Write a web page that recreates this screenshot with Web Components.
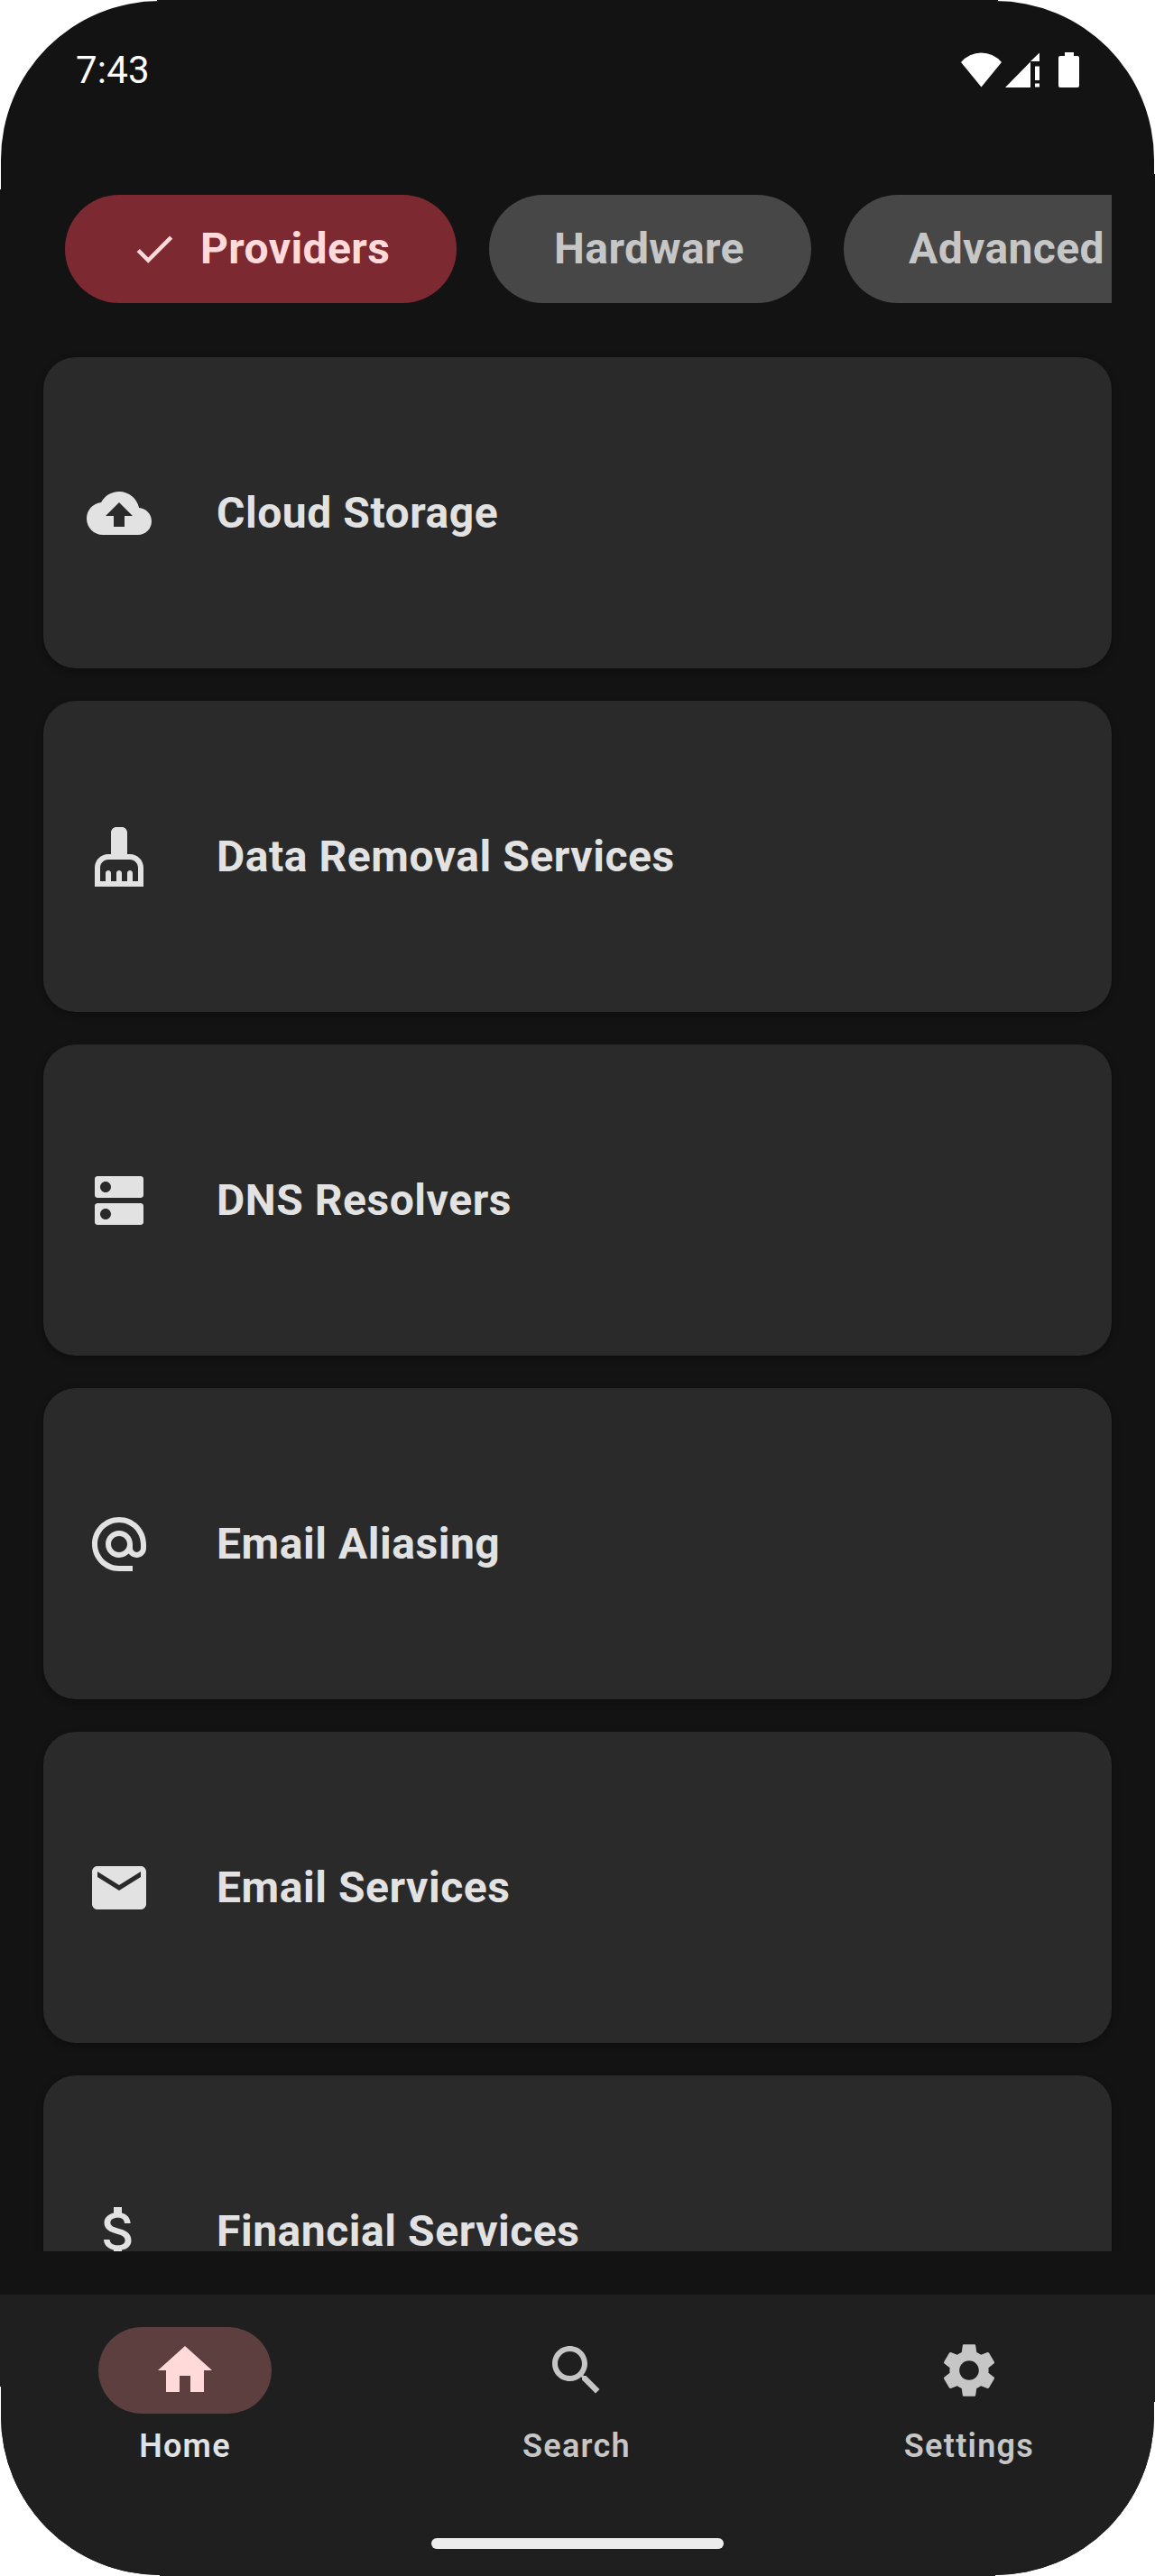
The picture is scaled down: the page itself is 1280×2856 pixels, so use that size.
<!DOCTYPE html>
<html lang="en">
<head>
<meta charset="utf-8">
<title>Providers</title>
<style>
  html, body { margin: 0; background: #fff; }
  body { font-family: Roboto, "Liberation Sans", sans-serif; width: 1280px; height: 2856px; overflow: hidden; }
</style>
</head>
<body>
<phone-screen>
  <status-bar slot="status" time="7:43"></status-bar>
  <chip-row slot="filters">
    <filter-chip selected style="width:434px">Providers</filter-chip>
    <filter-chip style="width:357px">Hardware</filter-chip>
    <filter-chip>Advanced</filter-chip>
  </chip-row>
  <category-card icon="cloud">Cloud Storage</category-card>
  <category-card icon="broom">Data Removal Services</category-card>
  <category-card icon="dns">DNS Resolvers</category-card>
  <category-card icon="at">Email Aliasing</category-card>
  <category-card icon="mail">Email Services</category-card>
  <category-card icon="dollar">Financial Services</category-card>
  <nav-bar slot="nav">
    <nav-item icon="home" selected>Home</nav-item>
    <nav-item icon="search">Search</nav-item>
    <nav-item icon="settings">Settings</nav-item>
  </nav-bar>
</phone-screen>

<script>
const ICONS = {
  check: 'M9 16.17L4.83 12l-1.42 1.41L9 19 21 7l-1.41-1.41z',
  cloud: 'M19.35 10.04C18.67 6.59 15.64 4 12 4 9.11 4 6.6 5.64 5.35 8.04 2.34 8.36 0 10.91 0 14c0 3.31 2.69 6 6 6h13c2.76 0 5-2.24 5-5 0-2.64-2.05-4.78-4.65-4.96zM14 13v4h-4v-4H7l5-5 5 5h-3z',
  broom: 'M16 11h-1V3c0-1.1-.9-2-2-2h-2c-1.1 0-2 .9-2 2v8H8c-2.76 0-5 2.24-5 5v7h18v-7c0-2.76-2.24-5-5-5zm3 10h-2v-3c0-.55-.45-1-1-1s-1 .45-1 1v3h-2v-3c0-.55-.45-1-1-1s-1 .45-1 1v3H9v-3c0-.55-.45-1-1-1s-1 .45-1 1v3H5v-5c0-1.65 1.35-3 3-3h8c1.65 0 3 1.35 3 3v5z',
  dns: 'M20 13H4c-.55 0-1 .45-1 1v6c0 .55.45 1 1 1h16c.55 0 1-.45 1-1v-6c0-.55-.45-1-1-1zM7 19c-1.1 0-2-.9-2-2s.9-2 2-2 2 .9 2 2-.9 2-2 2zM20 3H4c-.55 0-1 .45-1 1v6c0 .55.45 1 1 1h16c.55 0 1-.45 1-1V4c0-.55-.45-1-1-1zM7 9c-1.1 0-2-.9-2-2s.9-2 2-2 2 .9 2 2-.9 2-2 2z',
  at: 'M12 2C6.48 2 2 6.48 2 12s4.48 10 10 10h5v-2h-5c-4.34 0-8-3.66-8-8s3.66-8 8-8 8 3.66 8 8v1.43c0 .79-.71 1.57-1.5 1.57s-1.5-.78-1.5-1.57V12c0-2.76-2.24-5-5-5s-5 2.24-5 5 2.24 5 5 5c1.38 0 2.64-.56 3.54-1.47.65.89 1.77 1.47 2.96 1.47 1.97 0 3.5-1.6 3.5-3.57V12c0-5.52-4.48-10-10-10zm0 13c-1.66 0-3-1.34-3-3s1.34-3 3-3 3 1.34 3 3-1.34 3-3 3z',
  mail: 'M20 4H4c-1.1 0-1.99.9-1.99 2L2 18c0 1.1.9 2 2 2h16c1.1 0 2-.9 2-2V6c0-1.1-.9-2-2-2zm0 4l-8 5-8-5V6l8 5 8-5v2z',
  dollar: 'M11.8 10.9c-2.27-.59-3-1.2-3-2.15 0-1.09 1.01-1.85 2.7-1.85 1.78 0 2.44.85 2.5 2.1h2.21c-.07-1.72-1.12-3.3-3.21-3.81V3h-3v2.16c-1.94.42-3.5 1.68-3.5 3.61 0 2.31 1.91 3.46 4.7 4.13 2.5.6 3 1.48 3 2.41 0 .69-.49 1.79-2.7 1.79-2.06 0-2.87-.92-2.98-2.1h-2.2c.12 2.19 1.76 3.42 3.68 3.83V21h3v-2.15c1.95-.37 3.5-1.5 3.5-3.55 0-2.84-2.43-3.81-4.7-4.4z',
  home: 'M10 20v-6h4v6h5v-8h3L12 3 2 12h3v8z',
  search: 'M15.5 14h-.79l-.28-.27C15.41 12.59 16 11.11 16 9.5 16 5.91 13.09 3 9.5 3S3 5.91 3 9.5 5.91 16 9.5 16c1.61 0 3.09-.59 4.23-1.57l.27.28v.79l5 4.99L20.49 19l-4.99-5zm-6 0C7.01 14 5 11.99 5 9.5S7.01 5 9.5 5 14 7.01 14 9.5 11.99 14 9.5 14z',
  settings: 'M19.14 12.94c.04-.3.06-.61.06-.94 0-.32-.02-.64-.07-.94l2.03-1.58c.18-.14.23-.41.12-.61l-1.92-3.32c-.12-.22-.37-.29-.59-.22l-2.39.96c-.5-.38-1.03-.7-1.62-.94l-.36-2.54c-.04-.24-.24-.41-.48-.41h-3.84c-.24 0-.43.17-.47.41l-.36 2.54c-.59.24-1.13.57-1.62.94l-2.39-.96c-.22-.08-.47 0-.59.22L2.74 8.87c-.12.21-.08.47.12.61l2.03 1.58c-.05.3-.09.63-.09.94s.02.64.07.94l-2.03 1.58c-.18.14-.23.41-.12.61l1.92 3.32c.12.22.37.29.59.22l2.39-.96c.5.38 1.03.7 1.62.94l.36 2.54c.05.24.24.41.48.41h3.84c.24 0 .44-.17.47-.41l.36-2.54c.59-.24 1.13-.56 1.62-.94l2.39.96c.22.08.47 0 .59-.22l1.92-3.32c.12-.22.07-.47-.12-.61l-2.01-1.58zM12 15.6c-1.98 0-3.6-1.62-3.6-3.6s1.62-3.6 3.6-3.6 3.6 1.62 3.6 3.6-1.62 3.6-3.6 3.6z'
};

const define = (name, render) => customElements.define(name, class extends HTMLElement {
  constructor() { super(); this.attachShadow({ mode: 'open' }); }
  connectedCallback() { this.shadowRoot.innerHTML = render(this); }
});

define('md-icon', el => `
  <style>:host{display:block;flex:none;width:72px;height:72px}svg{display:block;width:100%;height:100%}</style>
  <svg viewBox="0 0 24 24" fill="currentColor"><path d="${ICONS[el.getAttribute('name')]}"/></svg>`);

define('phone-screen', () => `
  <style>
    :host{display:flex;flex-direction:column;width:1280px;height:2856px;background:#131313;
      clip-path:path('M0 210H1V177A176 176 0 0 1 177 1H174V0H1106V1H1103A176 176 0 0 1 1279 177V193H1280V2663H1279V2679A176 176 0 0 1 1103 2855V2856H177V2855A176 176 0 0 1 1 2679V2646H0Z')}
    main{flex:1;min-height:0;display:flex;flex-direction:column;padding:0 48px 48px}
    .list{flex:1;min-height:0;display:flex;flex-direction:column;gap:36px;overflow:hidden;
      margin:0 -48px;padding:60px 48px 0}
  </style>
  <slot name="status"></slot>
  <main>
    <slot name="filters"></slot>
    <div class="list"><slot></slot></div>
  </main>
  <slot name="nav"></slot>`);

define('status-bar', el => `
  <style>
    :host{display:flex;align-items:center;justify-content:space-between;height:156px;
      box-sizing:border-box;padding:0 84px;margin-bottom:60px;color:#fff;font-size:42px;line-height:48px;letter-spacing:.2px}
    .icons{display:flex;align-items:flex-start;height:39px;margin-bottom:1px}
    svg{display:block;fill:#fff}
  </style>
  <span>${el.getAttribute('time')}</span>
  <div class="icons">
    <svg width="45" height="39" viewBox="0 0 45 39"><path d="M0 11A29.400 29.400 0 0 1 45 11L22.500 38.500Z"/></svg>
    <svg width="38" height="39" viewBox="0 0 38 39" style="margin-left:4px"><path d="M0 39L28 10.500V39ZM28 10L38 .5V10ZM33 15.500H38V31H33ZM33 34.500H38V38.500H33Z"/></svg>
    <svg width="23" height="39" viewBox="0 0 23 39" style="margin-left:21px"><path d="M7 0H17V4H21Q23 4 23 6V37Q23 39 21 39H2Q0 39 0 37V6Q0 4 2 4H7Z"/></svg>
  </div>`);

define('chip-row', () => `
  <style>:host{display:flex;flex:none;gap:36px;height:120px;padding-left:24px;overflow:hidden}</style>
  <slot></slot>`);

define('filter-chip', el => `
  <style>
    :host{display:flex;flex:none;align-items:center;gap:24px;height:120px;box-sizing:border-box;padding:0 0 0 72px;min-width:357px;
      border-radius:60px;background:#474747;color:#c6c6c6;font-size:48px;font-weight:700;line-height:72px;
      letter-spacing:.4px;white-space:nowrap}
    :host([selected]){background:#7d2932;color:#ffdada}
    md-icon{width:54px;height:54px}
  </style>
  ${el.hasAttribute('selected') ? '<md-icon name="check"></md-icon>' : ''}
  <span><slot></slot></span>`);

define('category-card', el => `
  <style>
    :host{display:flex;flex:none;align-items:center;gap:72px;height:345px;box-sizing:border-box;padding:0 48px;
      border-radius:36px;background:#2a2a2a;color:#e2e2e2;box-shadow:0 3px 8px rgba(0,0,0,.3);
      font-size:48px;font-weight:700;line-height:72px;letter-spacing:.55px}
    md-icon{margin-top:1px}
  </style>
  <md-icon name="${el.getAttribute('icon')}"></md-icon>
  <span><slot></slot></span>`);

define('nav-bar', () => `
  <style>
    :host{display:flex;flex-direction:column;flex:none;align-items:center;justify-content:space-between;
      height:312px;box-sizing:border-box;padding:36px 0 30px;background:#1f1f1f}
    nav{display:grid;grid-template-columns:410px 410px 412px;gap:24px}
    .handle{width:324px;height:12px;border-radius:6px;background:#ececec}
  </style>
  <nav><slot></slot></nav>
  <div class="handle"></div>`);

define('nav-item', el => `
  <style>
    :host{display:flex;flex-direction:column;align-items:center;gap:12px;color:#c6c6c6;
      font-size:36px;font-weight:600;line-height:48px;letter-spacing:1.3px}
    .pill{display:flex;align-items:center;justify-content:center;width:192px;height:96px;border-radius:48px}
    :host([selected]){color:#e2e2e2}
    :host([selected]) .pill{background:#5d3f3f;color:#ffdad9}
  </style>
  <div class="pill"><md-icon name="${el.getAttribute('icon')}"></md-icon></div>
  <span><slot></slot></span>`);
</script>
</body>
</html>
